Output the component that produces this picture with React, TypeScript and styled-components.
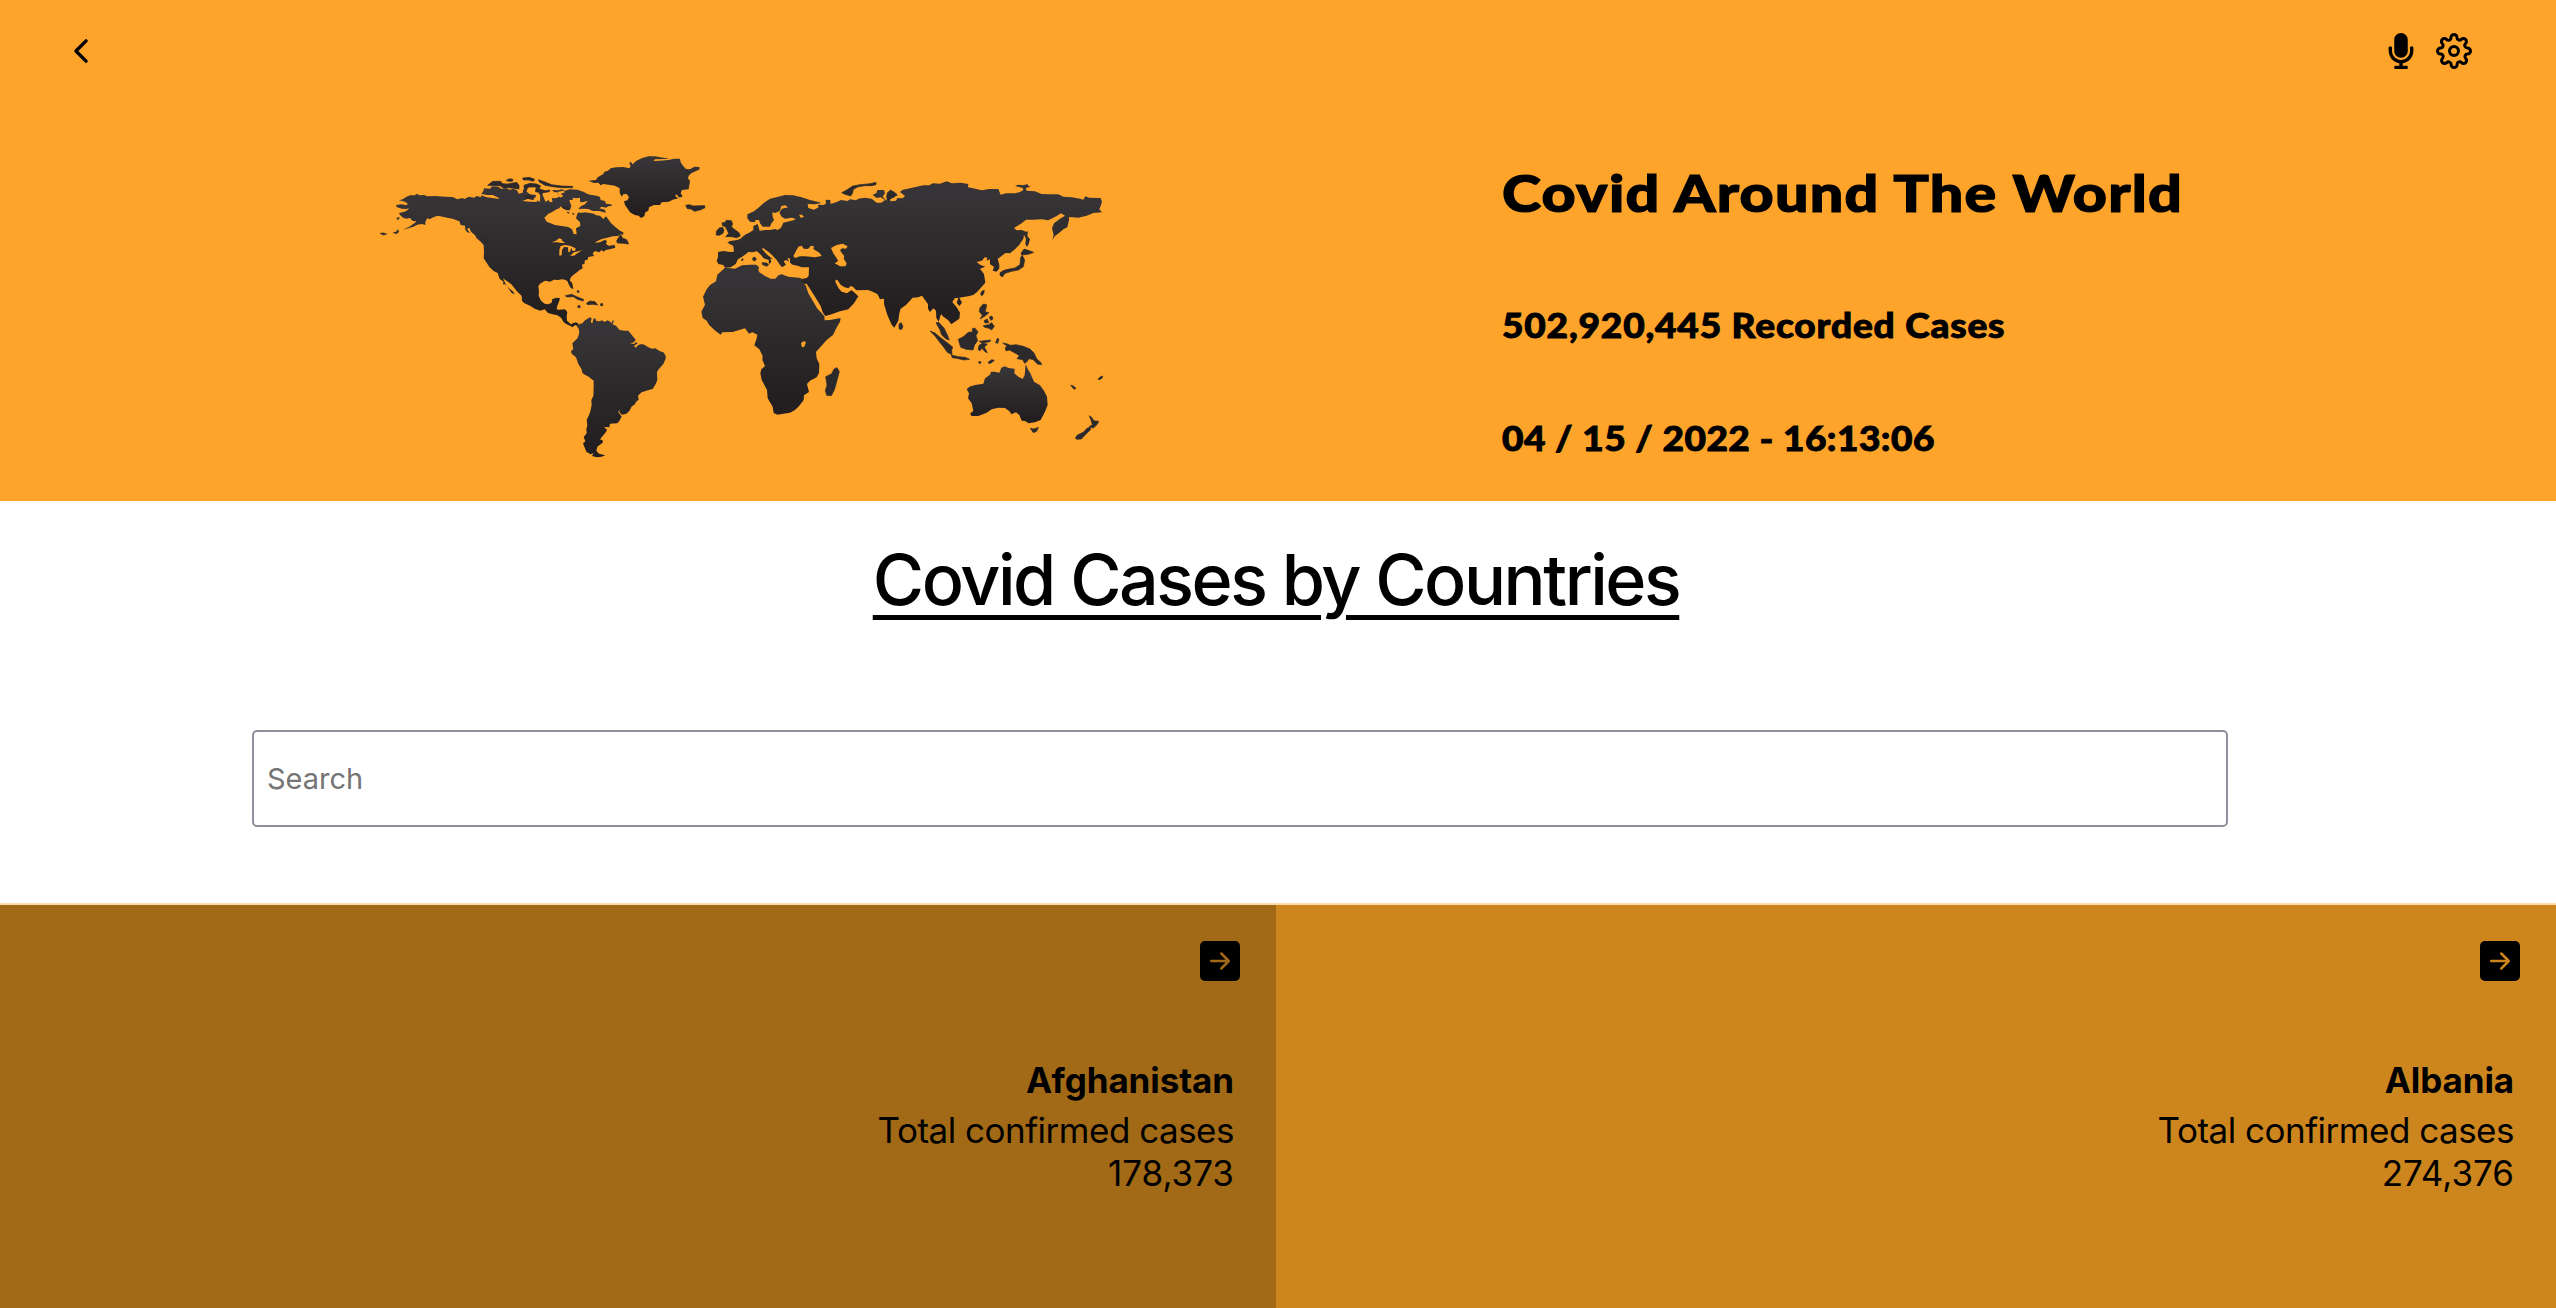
import React from 'react';
import styled, { createGlobalStyle } from 'styled-components';
import { FaMicrophone } from 'react-icons/fa';
import { FiSettings } from 'react-icons/fi';
import { IoChevronBack } from 'react-icons/io5';
import { BsArrowRightSquareFill } from 'react-icons/bs';

const ORANGE = '#ffa42b';

const GlobalStyle = createGlobalStyle`
  *, *::before, *::after { box-sizing: border-box; }
  body { margin: 0; background: #fff; color: #000; font-family: Inter, "Liberation Sans", sans-serif; }
  h1, h2, h3, p { margin: 0; }
`;

const Page = styled.div`
  width: 100%;
  height: 1308px;
  overflow: hidden;
  display: flex;
  flex-direction: column;
`;

const Header = styled.header`
  height: 501px;
  flex: none;
  background: ${ORANGE};
  display: flex;
  flex-direction: column;
`;

const Toolbar = styled.nav`
  height: 102px;
  padding: 0 84px 0 63px;
  display: flex;
  align-items: center;
  justify-content: space-between;
`;

const Actions = styled.div`
  display: flex;
  gap: 17px;
`;

const IconButton = styled.button`
  display: flex;
  padding: 0;
  border: 0;
  background: none;
  color: #000;
  font-size: 36px;
`;

const Hero = styled.section`
  display: grid;
  grid-template-columns: 1502px 1fr;
`;

const MapFrame = styled.div`
  padding: 43px 0 0 370px;
  svg { display: block; }
`;

const Summary = styled.div`
  display: flex;
  flex-direction: column;
  align-items: flex-start;
  font-family: Lato, "Open Sans", sans-serif;
  font-weight: 900;
  white-space: nowrap;
`;

const SummaryTitle = styled.h1`
  margin-top: 61px;
  font-size: 51px;
  line-height: 60px;
  font-weight: 900;
  letter-spacing: 1.1px;
  transform: scaleX(1.16);
  transform-origin: left;
  -webkit-text-stroke: 1.2px #000;
`;

const SummaryLine = styled.p<{ $gap: number; $spacing: number }>`
  margin-top: ${(p) => p.$gap}px;
  font-size: 34px;
  line-height: 40px;
  letter-spacing: ${(p) => p.$spacing}px;
  transform: scaleX(1.09);
  transform-origin: left;
  -webkit-text-stroke: 0.9px #000;
`;

const SearchSection = styled.section`
  height: 402px;
  flex: none;
  display: flex;
  flex-direction: column;
  align-items: center;
`;

const SectionTitle = styled.h2`
  margin: 36px 4px 0 0;
  font-size: 70px;
  line-height: 86px;
  font-weight: 450;
  letter-spacing: -2.45px;
  text-decoration: underline;
  text-decoration-thickness: 5px;
  text-underline-offset: 10px;
  white-space: nowrap;
`;

const SearchInput = styled.input`
  align-self: flex-start;
  width: 1976px;
  height: 97px;
  margin: 107px 0 0 252px;
  padding: 0 13px 1px;
  border: 2px solid #8f8f9d;
  border-radius: 5px;
  background: #fff;
  font: 400 29px Inter, "Liberation Sans", sans-serif;
  &::placeholder { color: #757575; opacity: 1; }
`;

const Countries = styled.main`
  flex: 1;
  border-top: 2px solid #ffdba4;
  display: grid;
  grid-template-columns: 1276px 1fr;
`;

const Card = styled.article<{ $tone: string }>`
  background: ${(p) => p.$tone};
  padding: 36px 36px 0 0;
  display: flex;
  flex-direction: column;
  align-items: flex-end;
  font-size: 36px;
`;

const CardIcon = styled.span`
  display: flex;
  font-size: 40px;
`;

const CardText = styled.div`
  margin-top: 78px;
  padding-right: 6px;
  text-align: right;
  line-height: 43px;
`;

const CountryName = styled.h3`
  margin-bottom: 7px;
  font-size: 35px;
  line-height: 43px;
  font-weight: 700;
  letter-spacing: -0.1px;
`;

const CardLine = styled.p<{ $spacing: number }>`
  font-size: 35px;
  letter-spacing: ${(p) => p.$spacing}px;
`;

/* Each part lists outline points relative to its own map tile. */
type Part = [number, number, string];
const outline = (...parts: Part[]) =>
  'M' +
  parts
    .flatMap(([ox, oy, pts]) =>
      pts.trim().split(/\s+/).map((p) => {
        const [x, y] = p.split(',').map(Number);
        return `${x + ox},${y + oy}`;
      }),
    )
    .join('L') +
  'Z';

const west = (s: string): Part => [0, 0, s];
const atlantic = (s: string): Part => [630, 0, s];
const south = (s: string): Part => [390, 405, s];
const europe = (s: string): Part => [960, 105, s];
const east = (s: string): Part => [1560, 75, s];

const northAmerica = outline(
  west(`87,166 98,163 108,156 120,151 134,151 141,146 148,151 162,150 172,154 195,153 225,155 248,156 262,163 277,159 283,162 297,155 312,158 320,153 334,157 333,151 350,157 372,160 389,162 382,156 368,150 352,150 334,147 340,138 342,130 360,131 366,124 385,125 393,131 408,130 420,134 430,131 441,136 446,146 458,143 459,136 463,128 472,132 470,140 480,148 498,150 496,158 484,157 478,160 492,162 499,166 510,170 511,150 517,147 522,160 527,171 535,165 540,172 548,170 545,160 560,159 575,150 566,150 560,141 553,142 546,135 565,136 575,133 585,137 600,133 622,134 640,140 655,148 665,150 680,152 690,156 692,165 705,168 708,176 722,178 727,182 715,184 708,188 695,185 688,190 705,194 707,203 695,204 685,198 668,200 652,194 635,195 628,199 630,204 646,202 660,204 672,206 678,211 690,212 700,222 708,214 715,223 722,233 735,245 748,256 761,263 758,270 752,266 745,273 728,274 712,278 695,282 678,290 675,293 690,292 705,284 711,289 708,297 716,302 734,300 736,308 722,312 708,315 700,320 695,315 688,322 675,318 668,325 672,333 655,336 652,345 645,345 643,358 636,358 638,370 628,376 618,384 606,393 601,400 600,407 607,415 610,432 603,430 597,420 592,408 585,404 575,403 565,405 552,404 540,410 525,407 510,416 505,424 507,440 506,452 513,467 524,476 535,478 545,473 547,462 560,458 570,460 567,470 562,482 560,493`),
  south(`176,89 195,88 202,96 200,108 201,122 213,133 220,129 228,127 236,131 232,138 225,135 218,142 207,136 198,132 190,125 184,114 172,106 158,103 144,99 134,88 121,92 104,86 90,77 72,69 66,62 65,48 50,33 34,13 16,0`),
  west(`399,400 410,424 430,440 434,448 425,444 415,430 405,418 398,418 401,410 389,402 383,384 372,379 358,366 348,350 341,340 342,320 341,300 332,290 320,280 315,271 303,260 298,248 291,252 300,264 292,262 286,255 285,242 272,240 268,229 250,222 225,217 203,212 190,217 178,223 172,219 166,231 166,240 155,237 142,239 130,245 115,250 98,254 118,245 133,235 140,229 128,228 120,219 110,221 100,219 90,210 87,204 103,200 113,195 117,188 110,192 95,191 80,186 78,180 95,178 108,181 114,177 105,170`),
);

const southAmerica = outline(
  south(`230,138 237,133 247,130 255,121 270,112 275,115 272,127 277,130 280,118 285,114 289,123 300,124 305,121 315,126 322,121 331,125 334,130 340,118 341,126 337,133 348,137 359,150 375,152 385,152 395,164 407,179 402,187 390,190 402,192 409,186 413,190 402,198 407,203 415,195 425,192 433,194 445,202 456,206 466,205 480,214 490,217 497,227 497,236 490,252 475,269 471,276 472,300 467,312 458,327 446,330 425,337 414,347 416,359 410,364 402,376 396,378 388,393 378,402 365,404 358,396 358,388 355,396 365,410 358,423 352,430 330,431 328,442 312,441 321,449 318,456 300,478 309,482 308,488 292,500 289,512 297,521 316,526 305,530 290,532 276,528 281,520 272,523 259,515 253,500 249,490 256,484 251,471 260,460 259,448 262,436 260,420 268,403 272,390 275,375 274,360 280,348 281,320 281,302 266,290 252,283 247,278 244,266 235,252 228,232 215,221 213,214 220,207 217,190 233,174 238,158 236,146`),
);

const greenland = outline(
  atlantic(`25,107 48,105 53,97 70,87 73,80 84,77 92,70 108,67 130,66 148,70 152,63 148,55 152,50 158,58 168,48 185,40 205,34 225,34 250,38 268,40 255,42 225,43 220,48 240,47 265,45 283,41 300,41 302,52 309,62 318,72 330,73 343,65 358,66 359,73 350,77 335,84 326,92 324,100 330,108 326,133 306,135 302,145 308,154 299,158 288,147 286,154 295,160 278,164 267,170 245,172 240,180 222,180 207,187 205,197 196,202 193,214 183,219 176,212 164,210 150,202 142,190 135,180 132,169 142,166 147,157 140,147 130,148 125,155 119,143 119,130 105,122 85,119 70,117 62,121 55,113 42,114`),
);

const eurasia = outline(
  europe(`105,263 100,255 85,252 80,243 84,230 84,216 100,213 120,216 132,215 130,198 112,188 120,183 138,181 150,177 165,164 180,157 190,150 190,138 203,132 209,152 225,150 240,150 255,147 263,150 273,143 280,128 310,121 318,117 305,113 285,116 275,110 268,98 276,86 294,82 286,76 274,78 270,92 256,99 247,97 248,110 252,120 243,132 240,140 218,140 210,130 207,120 197,120 194,127 180,125 172,115 172,103 192,94 207,82 222,68 240,56 262,51 285,45 310,46 335,52 360,60 385,66 394,69 375,73 353,72 355,84 372,89 386,82 383,74 402,75 408,70 407,59 421,60 422,72 440,66 453,60 473,63 480,58 498,61 505,56 525,53 545,56 560,68 574,68 585,60 572,52 560,54 548,45 560,38 562,30 582,30 585,40 578,50 590,62`),
  east(`-10,78 0,78 8,72 20,70 14,82 0,88 2,94 18,92 22,84 38,85 45,78 30,66 38,59 60,55 80,50 100,46 118,46 128,40 150,41 170,34 186,40 212,38 235,42 234,52 250,55 275,61 298,57 325,57 332,74 348,70 375,70 390,66 400,60 398,54 375,48 385,44 400,46 412,42 415,47 422,50 407,54 410,62 435,64 455,72 480,73 505,73 520,80 545,82 570,86 580,89 586,79 598,83 632,84 636,95 632,108 628,118 636,127 610,129 590,137 565,143 537,141 537,150 532,172 520,178 508,188 495,198 487,209 491,195 486,175 492,160 510,146 525,137 513,130 500,138 475,151 455,148 430,149 408,149 395,160 372,174 380,181 395,180 408,185 414,184 412,198 420,208 416,222 411,231 406,222 408,206 402,194 400,206 388,224 375,238 360,250 346,249 330,262 323,266 328,284 328,295 320,305 308,302 312,290 300,283 300,268 290,272 292,263 284,262 276,272 260,276 270,284 286,290 270,296 282,312 286,338 272,354 262,365 250,375 235,379 220,381 208,383 216,398 208,408 200,398 205,384 195,384 187,396 200,412 210,428 208,446 184,463 174,450 160,440 153,432 146,455 139,444 138,422 130,415 120,426 114,416 114,403 96,377 85,382 68,383 48,405 32,416 28,430 25,452 13,473 5,464 -8,435 -18,402 -18,386 -30,388 -38,372 -52,365 -66,360 -100,361 -115,352`),
  europe(`484,321 470,339 458,332 450,315 438,300 436,306 446,325 455,335 470,339 484,330 494,338 505,349 492,370 475,388 450,394 425,403 406,408 398,397 392,378 375,350 350,311 340,312 333,304 334,297 350,294 356,288 357,262 335,262 325,258 308,254 300,248 300,236 292,233 297,245 288,240 281,244 288,254 276,262 268,252 260,240 246,225 235,215 219,204 216,207 230,223 243,233 249,238 241,236 244,246 237,253 236,240 221,235 213,225 201,214 188,217 175,216 168,222 154,232 144,238 137,252 122,262`),
);

const africa = outline(
  europe(`105,263 122,265 135,266 156,256 180,254 199,254 207,262 205,270 208,277 225,288 242,296 256,296 265,286 275,283 295,290 310,292 333,294 338,310 347,316 355,340 370,365 381,385 394,398 403,409 404,421 420,420 452,414 450,425 441,440 429,465 410,480 392,500 378,516 380,535 388,552 387,579 380,592 360,602 351,612 357,636 342,646 341,660 328,677 315,690 300,698 262,704 251,699 248,680 233,655 231,630 215,600 211,580 214,568 225,558 217,540 218,528 208,508 193,496 200,475 202,464 187,457 177,461 165,445 150,449 128,456 97,457 92,464 76,452 58,436 50,422 38,414 34,395 45,374 39,350 50,328 60,315 78,304 82,284`),
);

const australia = outline(
  east(`230,658 238,650 255,645 280,641 285,625 300,614 303,605 313,605 328,608 334,593 345,589 355,594 374,596 373,610 385,620 398,627 404,615 407,583 415,600 421,610 432,635 450,646 462,662 471,680 473,705 465,725 452,750 435,757 416,760 405,753 395,752 388,735 378,727 364,733 360,725 345,714 325,713 305,718 290,728 265,738 245,738 240,731 250,722 245,700 234,685 237,670`),
);

const islands: string[] = [
  west('30,265 40,264 50,267 40,270'),
  west('70,263 80,261 83,254 86,260 80,266'),
  west('80,219 88,218 84,224'),
  west('335,277 345,283 353,292 349,295 340,286'),
  west('353,121 368,109 392,109 398,116 412,117 425,115 440,112 447,121 447,132 432,130 415,128 402,130 390,122 375,122'),
  west('408,106 420,101 429,103 427,109 415,109'),
  west('458,99 478,97 494,103 490,109 475,105 460,105'),
  west('505,104 525,111 545,119 575,123 608,124 608,128 575,128 548,125 525,121 508,111'),
  west('462,121 480,115 500,117 512,123 507,131 494,126 477,126 470,132 462,128'),
  west('498,130 510,132 525,137 540,135 538,140 520,143 512,151 506,142 496,140'),
  west('462,153 478,151 492,157 490,164 470,160'),
  west('740,287 747,276 752,268 757,279 770,284 776,297 758,295 742,294'),
  west('586,452 605,448 620,455 640,463 640,468 622,463 610,455 590,456'),
  west('650,474 660,468 675,470 683,480 668,478 652,479'),
  west('691,477 697,475 699,481 693,483'),
  west('621,438 627,437 627,442 622,442'),
  west('623,483 629,481 631,487 625,489'),
  west('577,187 588,184 598,188 592,193 582,191'),
  west('591,202 597,202 596,205'),
  west('607,205 612,206 611,209'),
  atlantic('317,181 328,179 340,183 360,182 374,182 375,188 360,195 343,199 333,192 322,191'),
  europe('96,128 104,128 109,121 124,122 128,132 124,140 133,148 147,158 151,168 140,173 125,170 107,170 116,160 110,148 105,139 98,138'),
  europe('80,152 88,144 98,142 102,150 99,160 88,166 78,165'),
  europe('455,38 470,30 488,18 510,14 540,11 558,7 558,14 545,17 525,17 505,20 490,28 488,38 482,48 465,43'),
  europe('592,38 602,30 615,38 622,46 608,50 595,62 590,50'),
  europe('188,234 194,231 199,237 195,243 189,241'),
  europe('155,238 159,236 159,241 155,242'),
  europe('216,248 230,249 236,254 231,259 218,254'),
  europe('407,590 425,581 432,567 441,563 448,575 440,605 433,630 424,647 410,646 406,632 411,615'),
  east('27,462 34,458 39,470 34,479 27,476'),
  east('330,308 342,301 358,297 375,294 390,284 392,262 397,256 404,270 400,290 385,300 365,304 345,310 337,321 330,316'),
  east('393,250 402,237 412,240 431,247 415,253 395,255'),
  east('275,364 283,361 281,371 275,378 272,371'),
  east('270,413 280,402 290,404 288,415 285,425 297,428 285,438 270,447 277,436 268,425'),
  east('298,441 306,438 309,447 302,451'),
  east('282,452 292,447 296,458 285,459'),
  east('280,467 296,464 305,458 313,469 305,480 297,475 282,471'),
  east('120,483 135,489 150,502 170,517 188,531 185,541 186,554 172,547 160,530 148,515 135,498'),
  east('138,458 146,457 162,474 172,495 178,510 168,507 155,495 150,480'),
  east('184,555 205,560 225,562 239,568 222,570 200,565 187,563'),
  east('205,508 220,500 235,487 247,486 247,476 254,474 264,485 258,497 263,512 254,524 249,540 228,538 212,532'),
  east('268,514 302,510 300,515 275,519'),
  east('264,538 268,525 280,519 292,523 283,531 292,548 285,545 275,534 270,543'),
  east('317,518 322,505 327,508 323,520'),
  east('294,577 305,569 313,571 305,578 297,581'),
  east('266,575 273,575 272,580 267,580'),
  east('338,519 350,521 362,526 378,524 400,529 420,537 432,549 440,566 453,578 455,584 442,582 430,569 417,566 410,576 404,580 398,569 381,566 388,557 375,549 358,540 348,543 346,532 352,529'),
  east('421,775 432,777 445,772 440,784 430,788'),
  east('598,737 605,742 611,752 626,754 622,763 610,774 598,770 607,764 603,750'),
  east('556,804 562,795 580,787 592,774 602,772 601,780 588,792 574,807 560,808'),
  east('542,646 550,648 558,655 552,658'),
  east('624,628 630,621 638,618 636,625 627,629'),
].map((part) => outline(part));

/* Seas, bays and lakes cut out of the land. */
const waters: string[] = [
  west('523,218 535,206 545,202 560,193 568,190 572,184 578,190 590,196 600,196 604,182 600,172 598,165 607,165 610,158 618,160 630,158 630,170 638,172 654,167 645,178 634,183 626,190 628,200 622,206 618,220 630,232 631,243 618,250 620,268 611,267 606,253 595,246 575,243 555,240 530,230'),
  west('626,192 640,191 655,192 668,198 688,198 706,203 705,209 690,210 678,207 660,202 640,201 626,202'),
  west('545,292 558,287 567,280 575,282 576,287 586,293 575,294 562,292'),
  west('568,332 568,315 572,303 585,300 600,302 617,310 615,318 607,317 604,308 600,320 595,322 594,307 582,306 576,315 575,331'),
  west('600,332 612,322 637,316 622,325 612,332'),
  west('562,141 580,137 585,142 572,146 580,153 570,158'),
  west('457,168 478,160 500,163 501,171 480,170'),
  europe('310,228 325,200 335,197 341,206 354,207 363,197 372,199 370,207 388,218 395,228 375,232 345,229 330,229 315,234'),
  europe('423,204 440,195 458,191 473,199 468,206 456,205 450,211 457,221 463,228 461,236 470,250 467,259 450,259 434,250 445,243 438,232 430,220'),
  europe('333,490 340,484 348,486 343,500 336,502'),
  europe('327,104 336,104 342,111 332,113'),
  europe('436,299 442,300 452,314 462,321 475,325 482,318 490,321 497,330 484,330 470,340 458,334 446,322'),
].map((part) => outline(part));

const WorldMap = () => (
  <svg width="740" height="320" viewBox="0 0 2220 960" role="img" aria-label="World map">
    <defs>
      <linearGradient id="land" x1="0" y1="0" x2="0" y2="1">
        <stop offset="0.1" stopColor="#363436" />
        <stop offset="0.9" stopColor="#231f20" />
      </linearGradient>
    </defs>
    <g fill="url(#land)" strokeLinejoin="round">
      <path d={northAmerica} />
      <path d={southAmerica} />
      <path d={greenland} />
      <path d={africa} />
      <path d={eurasia} />
      <path d={australia} />
    </g>
    <g fill={ORANGE}>
      {waters.map((d) => <path key={d} d={d} />)}
    </g>
    <g fill="#2b292b" stroke="#2b292b" strokeWidth="2" strokeLinejoin="round">
      {islands.map((d) => <path key={d} d={d} />)}
    </g>
  </svg>
);

const countries = [
  { name: 'Afghanistan', cases: '178,373', tone: '#a26a16' },
  { name: 'Albania', cases: '274,376', tone: '#cd861e' },
];

export default function App() {
  return (
    <>
      <GlobalStyle />
      <Page>
        <Header>
          <Toolbar>
            <IconButton aria-label="Back"><IoChevronBack /></IconButton>
            <Actions>
              <IconButton aria-label="Voice"><FaMicrophone /></IconButton>
              <IconButton aria-label="Settings"><FiSettings /></IconButton>
            </Actions>
          </Toolbar>
          <Hero>
            <MapFrame><WorldMap /></MapFrame>
            <Summary>
              <SummaryTitle>Covid Around The World</SummaryTitle>
              <SummaryLine $gap={82} $spacing={0.75}>502,920,445 Recorded Cases</SummaryLine>
              <SummaryLine $gap={73} $spacing={0.4}>04 / 15 / 2022 - 16:13:06</SummaryLine>
            </Summary>
          </Hero>
        </Header>
        <SearchSection>
          <SectionTitle>Covid Cases by Countries</SectionTitle>
          <SearchInput type="text" placeholder="Search" />
        </SearchSection>
        <Countries>
          {countries.map((c) => (
            <Card key={c.name} $tone={c.tone}>
              <CardIcon><BsArrowRightSquareFill /></CardIcon>
              <CardText>
                <CountryName>{c.name}</CountryName>
                <CardLine $spacing={-0.5}>Total confirmed cases</CardLine>
                <CardLine $spacing={0}>{c.cases}</CardLine>
              </CardText>
            </Card>
          ))}
        </Countries>
      </Page>
    </>
  );
}
